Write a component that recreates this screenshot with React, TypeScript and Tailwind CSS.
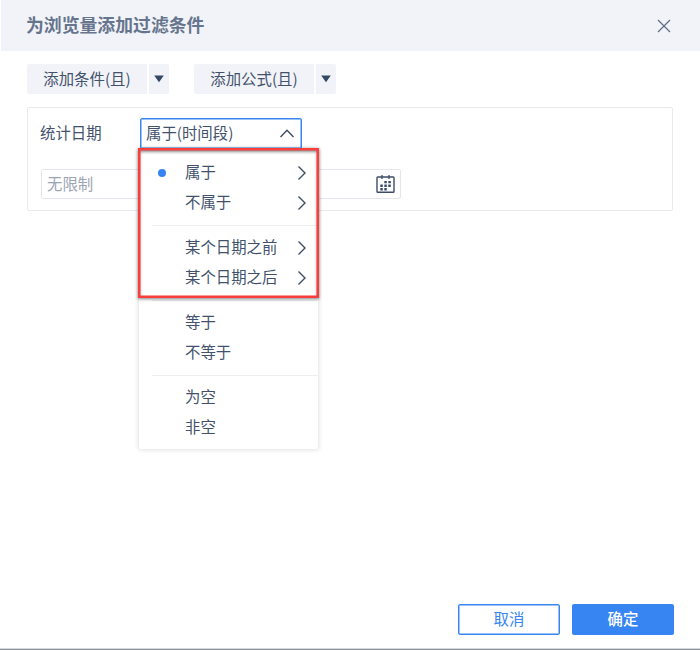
import { useState } from 'react'
import clsx from 'clsx'

type MenuItem = { value: string; hasChildren?: boolean }

const MENU_GROUPS: MenuItem[][] = [
  [
    { value: '属于', hasChildren: true },
    { value: '不属于', hasChildren: true },
  ],
  [
    { value: '某个日期之前', hasChildren: true },
    { value: '某个日期之后', hasChildren: true },
  ],
  [{ value: '等于' }, { value: '不等于' }],
  [{ value: '为空' }, { value: '非空' }],
]

export default function App() {
  const [selected, setSelected] = useState('属于')
  const [open, setOpen] = useState(true)

  return (
    <div className="flex h-[650px] w-[700px] flex-col overflow-hidden border-b border-[#8b9097] bg-white font-['Noto_Sans_CJK_SC',sans-serif] text-[15.4px] leading-none text-[#42526c]">
      <header className="ml-px flex h-[51px] shrink-0 items-center justify-between bg-[#f2f3f8] pr-[29px] pl-[25px]">
        <h1 className="pb-[2px] text-[17.85px] font-bold text-[#66758d]">为浏览量添加过滤条件</h1>
        <button aria-label="关闭">
          <CloseIcon />
        </button>
      </header>

      <div className="mt-[13px] ml-[27px] flex gap-[25px]">
        <SplitButton label="添加条件(且)" />
        <SplitButton label="添加公式(且)" />
      </div>

      <section className="mt-[13px] ml-[27px] h-[104px] w-[646px] rounded-xs border border-[#e8eaed] pt-[10px] pl-[13px]">
        <div className="flex h-[31px] items-center">
          <span className="-ml-px w-[99px] pb-[2px]">统计日期</span>
          <div className="relative ml-px">
            <button
              className="flex h-[31px] w-[162px] items-center justify-between rounded-xs border border-[#3685f2] bg-white pr-[7px] pl-[5px] shadow-[inset_0_0_0_0.5px_#3685f2]"
              onClick={() => setOpen(!open)}
            >
              <span className="pb-[2px]">属于(时间段)</span>
              <ChevronUp />
            </button>
            {open && <Menu selected={selected} onSelect={setSelected} />}
          </div>
        </div>
        <div className="mt-5 flex h-[30px] w-[360px] items-center justify-between rounded-xs border border-[#e4e6ec] pr-[5px] pl-[5px]">
          <span className="pb-px text-[#9ca5b3]">无限制</span>
          <CalendarIcon />
        </div>
      </section>

      <footer className="mt-auto mr-[26px] mb-[13px] flex justify-end gap-3">
        <button className="h-[31px] w-[102px] rounded-xs border border-[#3685f2] pb-[2px] text-[#3685f2] shadow-[inset_0_0_0_0.5px_#3685f2]">
          取消
        </button>
        <button className="h-[31px] w-[102px] rounded-xs bg-[#3685f2] pb-[2px] font-medium text-white">
          确定
        </button>
      </footer>
      <div className="h-px shrink-0 bg-[#d6d8db]" />
    </div>
  )
}

function SplitButton({ label }: { label: string }) {
  return (
    <div className="flex h-[30px] gap-[2px]">
      <button className="w-[120px] rounded-l-xs bg-[#f2f3f8] pb-px">{label}</button>
      <button className="flex w-5 items-center justify-center rounded-r-xs bg-[#f2f3f8]" aria-label="更多">
        <svg width="10" height="8" viewBox="0 0 10 8" fill="#344863">
          <path d="M0.2 0.5h9.6L5 7.2z" />
        </svg>
      </button>
    </div>
  )
}

function Menu({ selected, onSelect }: { selected: string; onSelect: (value: string) => void }) {
  return (
    <div className="absolute top-[31px] -left-px z-10 w-[179px] rounded-xs bg-white pt-[8.5px] pb-[5.5px] shadow-[0_0_4px_1px_rgba(60,70,90,0.16)]">
      {MENU_GROUPS.map((group, i) => (
        <div key={group[0].value}>
          {i > 0 && <div className="my-[6.5px] ml-[13px] h-px bg-[#edeff2]" />}
          {group.map((item) => (
            <button
              key={item.value}
              className="flex h-[30.5px] w-full items-center pr-[12px] pl-[19px]"
              onClick={() => onSelect(item.value)}
            >
              <span
                className={clsx(
                  'mr-[19px] size-2 rounded-full',
                  item.value === selected && 'bg-[#3685f2]',
                )}
              />
              <span className="pb-[3px]">{item.value}</span>
              {item.hasChildren && <ChevronRight />}
            </button>
          ))}
        </div>
      ))}
      {/* frame around the date range operators */}
      <div className="pointer-events-none absolute -top-px -left-px h-[150px] w-[181px] border-2 border-[#fa3e3e] shadow-[0_1px_3px_rgba(0,0,0,0.5),inset_0_0_0_0.5px_#fa3e3e,inset_0_2px_3px_rgba(0,0,0,0.45)]" />
    </div>
  )
}

function CloseIcon() {
  return (
    <svg width="14" height="14" viewBox="0 0 14 14" fill="none" stroke="#5f6f88" strokeWidth="1.3">
      <path d="M1 1l12 12M13 1L1 13" />
    </svg>
  )
}

function ChevronUp() {
  return (
    <svg width="14" height="9" viewBox="0 0 14 9" fill="none" stroke="#3d4d66" strokeWidth="1.4">
      <path d="M0.5 8L7 1.2L13.5 8" />
    </svg>
  )
}

function ChevronRight() {
  return (
    <svg
      className="ml-auto"
      width="8"
      height="14"
      viewBox="0 0 8 14"
      fill="none"
      stroke="#3d4d66"
      strokeWidth="1.4"
    >
      <path d="M0.5 0.5L7 7L0.5 13.5" />
    </svg>
  )
}

function CalendarIcon() {
  return (
    <svg width="19" height="18" viewBox="0 0 19 18" fill="none" stroke="#3d4d66">
      <rect x="1" y="2" width="17" height="15.2" rx="0.8" strokeWidth="1.4" />
      <path d="M6 0v4M13 0v4" strokeWidth="1.3" />
      <path
        d="M8.3 7.1h2.5M12.3 7.1h2.5M4.3 10.7h2.5M8.3 10.7h2.5M12.3 10.7h2.5M4.3 14.2h2.5M8.3 14.2h2.5"
        strokeWidth="2.4"
      />
    </svg>
  )
}
